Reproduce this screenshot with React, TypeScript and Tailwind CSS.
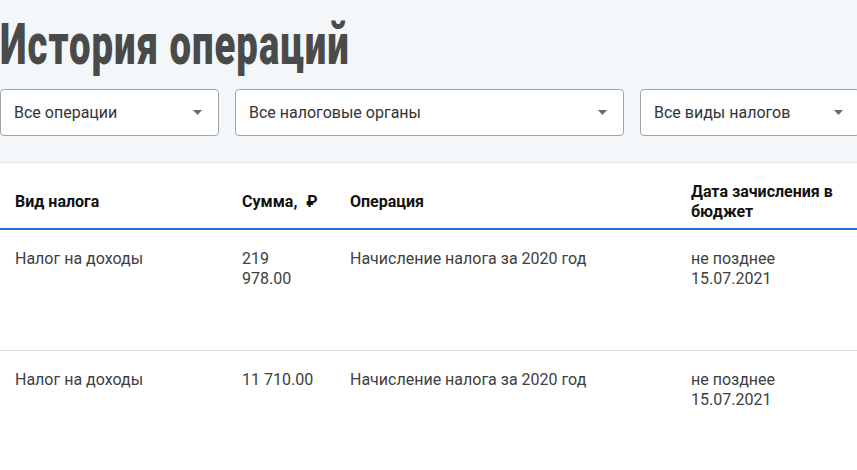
import React from "react";

type Row = {
  kind: string;
  amount: string;
  operation: string;
  date: string[];
};

const rows: Row[] = [
  {
    kind: "Налог на доходы",
    amount: "219 978.00",
    operation: "Начисление налога за 2020 год",
    date: ["не позднее", "15.07.2021"],
  },
  {
    kind: "Налог на доходы",
    amount: "11 710.00",
    operation: "Начисление налога за 2020 год",
    date: ["не позднее", "15.07.2021"],
  },
];

function Caret() {
  return (
    <svg width="9" height="5" viewBox="0 0 9 5" className="shrink-0">
      <path d="M0 0 L9 0 L4.5 5 Z" fill="#6b6b6b" />
    </svg>
  );
}

function Select({ label, width }: { label: string; width: string }) {
  return (
    <div
      className={`${width} h-[47px] shrink-0 flex items-center justify-between pl-[13px] pr-[16px] bg-white border border-[#a3a3a3] rounded-[4px] text-[16px] text-[#333333]`}
    >
      <span>{label}</span>
      <Caret />
    </div>
  );
}

export default function App() {
  return (
    <div
      className="w-[857px] h-[470px] overflow-hidden bg-white"
      style={{ fontFamily: "Roboto, 'Liberation Sans', Arial, sans-serif" }}
    >
      <div className="bg-[#f3f7fa] border-b border-[#e1e5e9] pt-[12px] pb-[26px]">
        <h1 className="h-[64px] flex items-center text-[58px] leading-none font-black text-[#4a4a4a] whitespace-nowrap origin-left scale-x-[0.66] tracking-[1.5px]">
          История операций
        </h1>
        <div className="mt-[13px] flex gap-[16px]">
          <Select label="Все операции" width="w-[219px]" />
          <Select label="Все налоговые органы" width="w-[389px]" />
          <Select label="Все виды налогов" width="w-[220px]" />
        </div>
      </div>

      <div className="text-[16px] leading-[20px]">
        <div className="grid grid-cols-[227px_108px_341px_181px] h-[67px] border-b-2 border-[#1d6fd0] font-bold text-[#111111]">
          <div className="px-[15px] pt-[13px] flex items-center">Вид налога</div>
          <div className="px-[15px] pt-[13px] flex items-center whitespace-nowrap">
            Сумма,<span className="ml-[9px]">₽</span>
          </div>
          <div className="px-[15px] pt-[13px] flex items-center">Операция</div>
          <div className="pl-[15px] pr-[16px] pt-[13px] flex items-center">
            Дата зачисления в бюджет
          </div>
        </div>

        {rows.map((r, i) => (
          <div
            key={i}
            className="grid grid-cols-[227px_108px_341px_181px] h-[121px] border-b border-[#dcdcdc] text-[#404040] pt-[19px]"
          >
            <div className="px-[15px]">{r.kind}</div>
            <div className="px-[15px]">{r.amount}</div>
            <div className="px-[15px]">{r.operation}</div>
            <div className="px-[15px]">
              {r.date.map((d) => (
                <div key={d}>{d}</div>
              ))}
            </div>
          </div>
        ))}
      </div>
    </div>
  );
}
